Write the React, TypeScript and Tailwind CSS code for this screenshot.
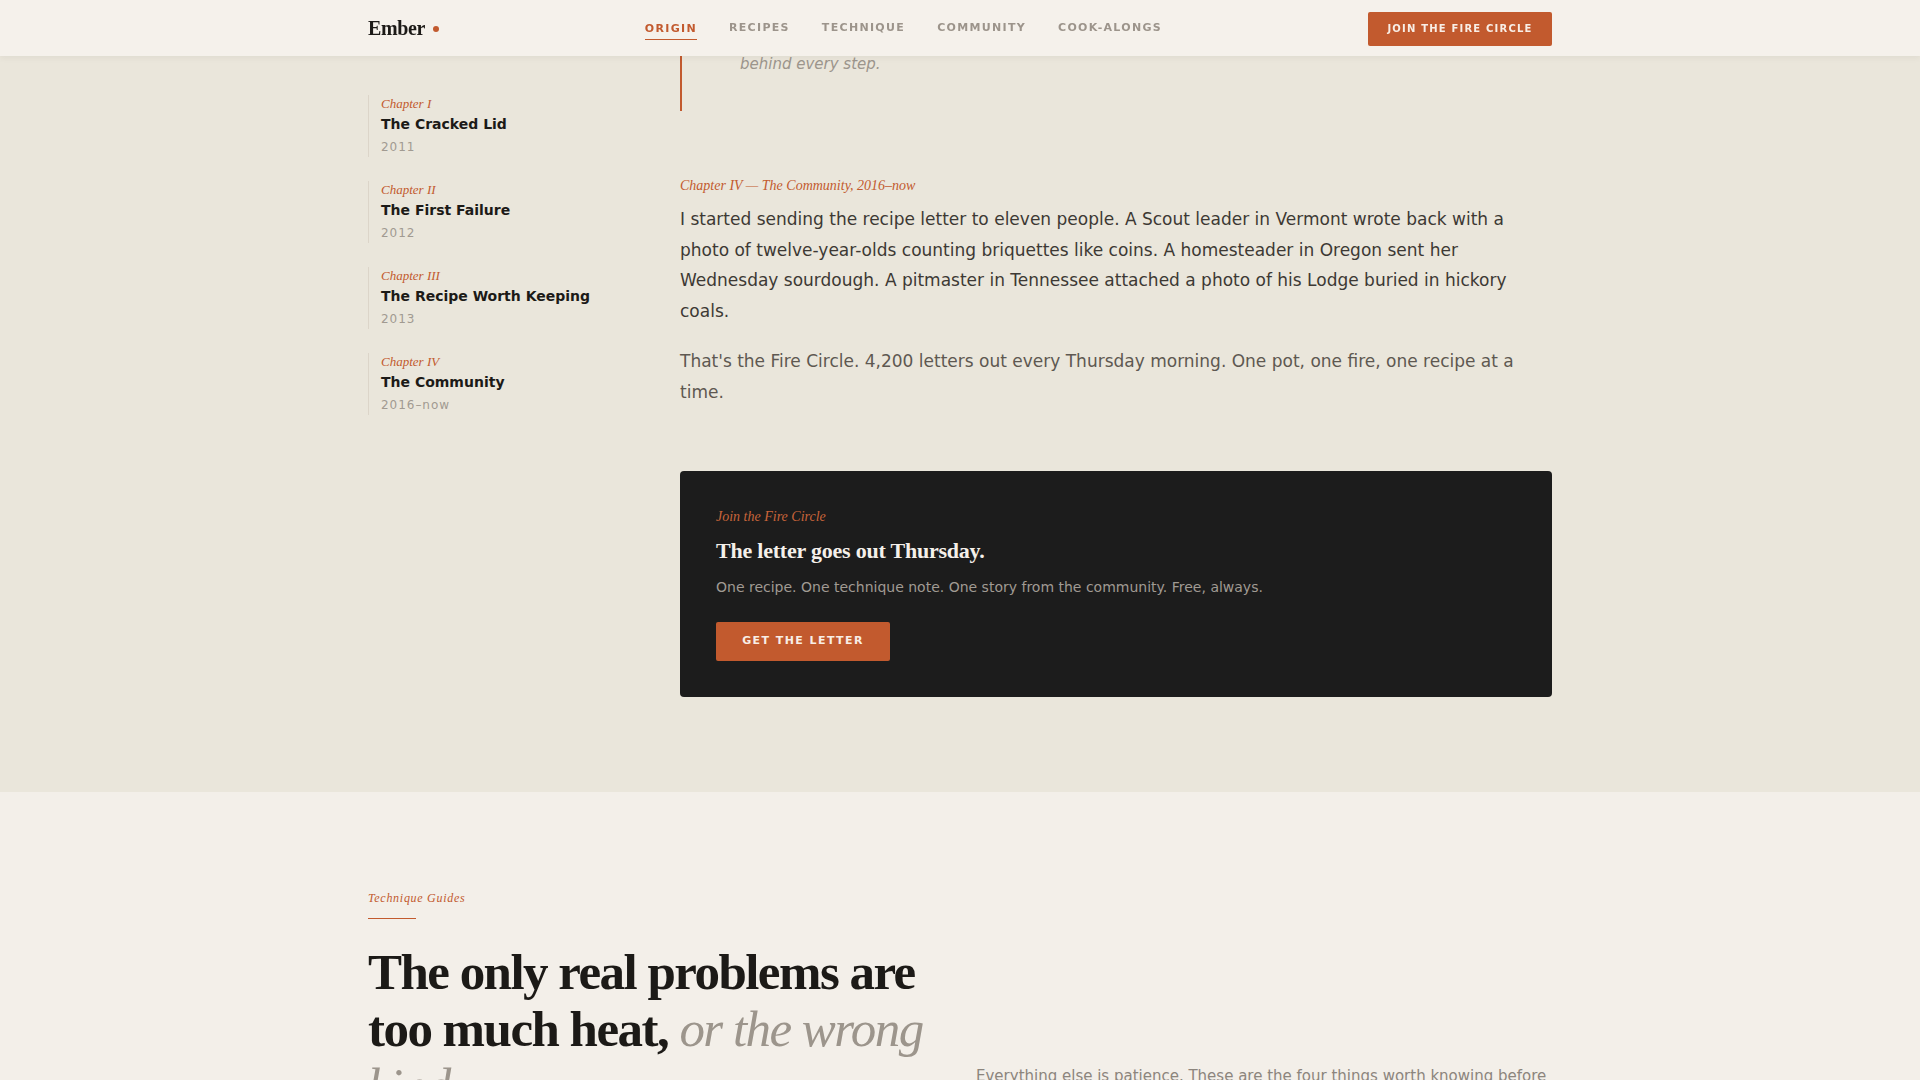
const serif = "font-['Liberation_Serif',Georgia,serif]";
const sans = "font-['DejaVu_Sans',Verdana,sans-serif]";

const navLinks = ["Origin", "Recipes", "Technique", "Community", "Cook-alongs"];

const chapters = [
  { num: "I", title: "The Cracked Lid", year: "2011" },
  { num: "II", title: "The First Failure", year: "2012" },
  { num: "III", title: "The Recipe Worth Keeping", year: "2013" },
  { num: "IV", title: "The Community", year: "2016–now" },
];

function Header() {
  return (
    <header className="fixed inset-x-0 top-0 z-20 h-14 bg-[#f5f1eb] shadow-[0_2px_6px_rgba(60,45,30,0.06)]">
      <div className="mx-auto flex h-full w-[1184px] items-center justify-between">
        <a className="flex items-center gap-2">
          <span className={`${serif} text-[20px] font-bold tracking-[-0.02em] text-[#1c1a17]`}>Ember</span>
          <span className="mt-[2px] size-[6px] rounded-full bg-[#c25a2e]" />
        </a>
        <nav className={`${sans} flex items-center gap-8 text-[11px] font-semibold uppercase tracking-[0.12em]`}>
          {navLinks.map((l, i) => (
            <a
              key={l}
              className={
                i === 0
                  ? "mt-[5px] border-b-[1.5px] border-[#c25a2e] pb-[2px] text-[#c25a2e]"
                  : "pt-[1px] text-[#9c948b]"
              }
            >
              {l}
            </a>
          ))}
        </nav>
        <button
          className={`${sans} mt-[1px] h-[34px] w-[184px] rounded-[2px] bg-[#c25a2e] text-[10px] font-bold uppercase tracking-[0.12em] text-[#f8eee6]`}
        >
          Join the Fire Circle
        </button>
      </div>
    </header>
  );
}

function ChapterNav() {
  return (
    <aside className="w-[248px] shrink-0 pt-[95px]">
      <ol className="flex flex-col gap-6">
        {chapters.map((c) => (
          <li key={c.num} className="border-l border-[#dcd5c9] pl-3">
            <p className={`${serif} text-[13px] italic leading-[18px] text-[#c25a2e]`}>Chapter {c.num}</p>
            <p className={`${sans} text-[14px] font-bold leading-[22px] text-[#1c1a17]`}>{c.title}</p>
            <p className={`${sans} pt-[2px] text-[12px] leading-[20px] tracking-[0.08em] text-[#a19a91]`}>{c.year}</p>
          </li>
        ))}
      </ol>
    </aside>
  );
}

function Story() {
  return (
    <div className="min-w-0 flex-1">
      <blockquote className="relative border-l-2 border-[#c25a2e] pt-[22px] pb-[33px] pl-[58px]">
        {/* decorative open-quote, mostly tucked under the sticky bar */}
        <span className={`${serif} absolute top-[37px] left-[30px] text-[44px] leading-none text-[#6f685f]`}>“</span>
        <p className={`${sans} text-[15px] italic leading-[28px] text-[#9c958c]`}>
          Every recipe in the letter carries the fire
          <br />
          behind every step.
        </p>
      </blockquote>

      <p className={`${serif} mt-[65px] text-[14px] italic leading-[20px] text-[#c25a2e]`}>
        Chapter IV — The Community, 2016–now
      </p>
      <div className={`${sans} mt-2 flex flex-col gap-5 text-[17px] leading-[1.8]`}>
        <p className="text-[#3d3934]">
          I started sending the recipe letter to eleven people. A Scout leader in Vermont wrote back with a photo of
          twelve-year-olds counting briquettes like coins. A homesteader in Oregon sent her Wednesday sourdough. A
          pitmaster in Tennessee attached a photo of his Lodge buried in hickory coals.
        </p>
        <p className="text-[#5e5851]">
          That's the Fire Circle. 4,200 letters out every Thursday morning. One pot, one fire, one recipe at a time.
        </p>
      </div>

      <div className="mt-[63px] rounded-[4px] bg-[#1c1c1c] p-9">
        <p className={`${serif} text-[14px] italic leading-[20px] text-[#c8643a]`}>Join the Fire Circle</p>
        <h3 className={`${serif} mt-[9px] text-[22px] font-bold leading-[30px] tracking-[-0.01em] text-[#f5f0ea]`}>
          The letter goes out Thursday.
        </h3>
        <p className={`${sans} mt-[10px] text-[14px] leading-[22px] text-[#a09a93]`}>
          One recipe. One technique note. One story from the community. Free, always.
        </p>
        <button
          className={`${sans} mt-[24px] h-[39px] w-[174px] rounded-[2px] bg-[#c25a2e] text-[11px] font-bold uppercase tracking-[0.13em] text-[#f8eee6]`}
        >
          Get the Letter
        </button>
      </div>
    </div>
  );
}

function TechniqueIntro() {
  return (
    <section className="bg-[#f3efe9] pt-[98px] pb-24">
      <div className="mx-auto w-[1184px]">
        <p className={`${serif} text-[12px] italic leading-[16px] tracking-[0.06em] text-[#c25a2e]`}>Technique Guides</p>
        <div className="mt-[12px] h-px w-12 bg-[#c25a2e]" />
        <div className="mt-[25px] grid grid-cols-2 items-end gap-8">
          <h2 className={`${serif} text-[51px] font-bold leading-[57px] tracking-[-0.03em] text-[#1c1a17]`}>
            The only real problems are too much heat,{" "}
            <em className="font-normal text-[#9c958c]">or the wrong kind.</em>
          </h2>
          <p className={`${sans} text-[15px] leading-[1.7] text-[#8c857d]`}>
            Everything else is patience. These are the four things worth knowing before you light a single coal.
          </p>
        </div>
      </div>
    </section>
  );
}

export default function App() {
  return (
    <div className="min-h-screen bg-[#eae6db]">
      <Header />
      <section className="bg-[#eae6db] pb-[95px]">
        <div className="mx-auto flex w-[1184px] gap-16">
          <ChapterNav />
          <Story />
        </div>
      </section>
      <TechniqueIntro />
    </div>
  );
}
